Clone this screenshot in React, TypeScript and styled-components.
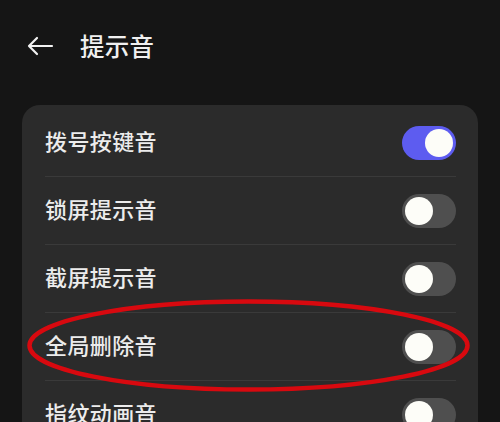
import React from "react";
import styled, { createGlobalStyle } from "styled-components";

const GlobalStyle = createGlobalStyle`
  html, body {
    margin: 0;
    padding: 0;
    background: #151515;
  }
  body {
    font-family: "Noto Sans CJK SC", "Noto Sans", sans-serif;
    color: #ececec;
    overflow: hidden;
  }
`;

type SettingRowProps = {
  title: string;
  isChecked: boolean;
  last?: boolean;
};

const items: { title: string; on: boolean }[] = [
  { title: "拨号按键音", on: true },
  { title: "锁屏提示音", on: false },
  { title: "截屏提示音", on: false },
  { title: "全局删除音", on: false },
  { title: "指纹动画音", on: false },
];

const Toggle: React.FC<{ on: boolean }> = ({ on }) => (
  <Track $on={on}>
    <Knob $on={on} />
  </Track>
);

const SettingRow: React.FC<SettingRowProps> = ({ title, isChecked, last }) => (
  <Row $last={last}>
    <RowTitle>{title}</RowTitle>
    <Toggle on={isChecked} />
  </Row>
);

const App: React.FC = () => {
  return (
    <Page>
      <GlobalStyle />
      <Header>
        <BackButton aria-label="back">
          <svg width="28" height="22" viewBox="0 0 28 22" fill="none">
            <path
              d="M26 11H3M11 3L3 11l8 8"
              stroke="#f2f2f2"
              strokeWidth="2.2"
              strokeLinecap="round"
              strokeLinejoin="round"
            />
          </svg>
        </BackButton>
        <Title>提示音</Title>
      </Header>
      <Card>
        {items.map((it, i) => (
          <SettingRow
            key={it.title}
            title={it.title}
            isChecked={it.on}
            last={i === items.length - 1}
          />
        ))}
      </Card>
      <Highlight viewBox="0 0 443 93">
        <ellipse
          cx="221.5"
          cy="46.5"
          rx="219"
          ry="44"
          fill="none"
          stroke="#d8090f"
          strokeWidth="4.5"
        />
      </Highlight>
    </Page>
  );
};

const Page = styled.div`
  position: relative;
  width: 500px;
  height: 422px;
  overflow: hidden;
  padding: 0 22px;
  box-sizing: border-box;
`;

const Header = styled.div`
  display: flex;
  align-items: center;
  height: 92px;
  padding-left: 4px;
  gap: 26px;
`;

const BackButton = styled.div`
  display: flex;
  align-items: center;
  width: 28px;
  height: 28px;
`;

const Title = styled.h1`
  margin: 0 0 2px;
  font-size: 24.5px;
  font-weight: 500;
  color: #f0f0f0;
  letter-spacing: 0.3px;
`;

const Card = styled.div`
  margin-top: 13px;
  background: #2b2b2b;
  border-radius: 18px;
  padding: 4px 22px 0 23px;
`;

const Row = styled.div<{ $last?: boolean }>`
  display: flex;
  align-items: center;
  justify-content: space-between;
  height: 67px;
  border-bottom: 1px solid ${(p) => (p.$last ? "transparent" : "#3a3a3a")};
`;

const RowTitle = styled.span`
  font-size: 22px;
  font-weight: 500;
  color: #ececec;
  letter-spacing: 0.4px;
  line-height: 1;
  margin-bottom: 6px;
`;

const Track = styled.div<{ $on: boolean }>`
  position: relative;
  width: 54px;
  height: 34px;
  border-radius: 17px;
  background: ${(p) => (p.$on ? "#5d5cf0" : "#4f4f4f")};
  flex-shrink: 0;
`;

const Knob = styled.div<{ $on: boolean }>`
  position: absolute;
  top: 3px;
  left: ${(p) => (p.$on ? "23px" : "3px")};
  width: 28px;
  height: 28px;
  border-radius: 50%;
  background: #fdfdf8;
`;

const Highlight = styled.svg`
  position: absolute;
  left: 27px;
  top: 299px;
  width: 443px;
  height: 93px;
  pointer-events: none;
`;

export default App;
